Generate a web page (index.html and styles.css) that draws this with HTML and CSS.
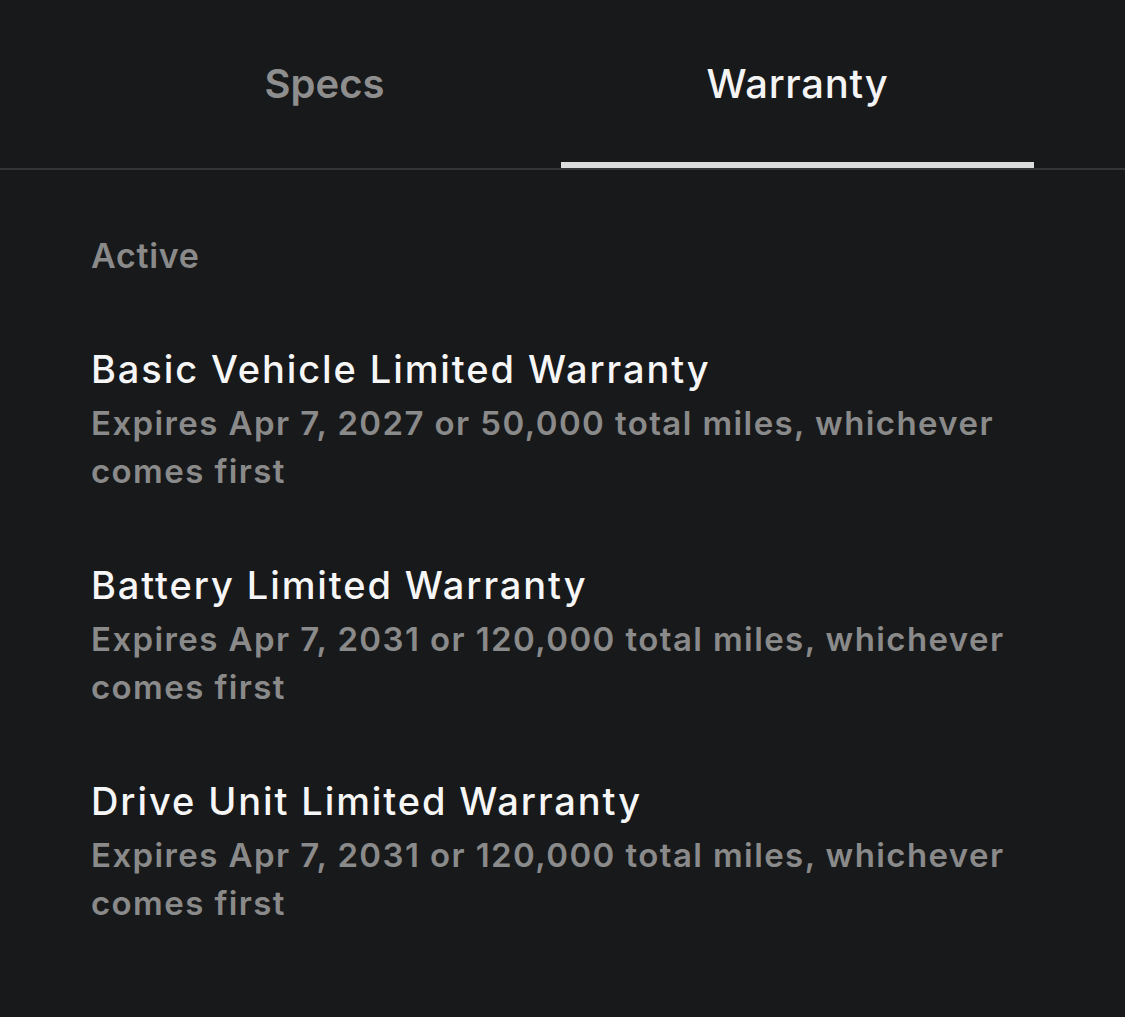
FILE: index.html
```html
<!DOCTYPE html>
<html lang="en">
<head>
    <meta charset="UTF-8">
    <meta name="viewport" content="width=device-width, initial-scale=1.0">
    <title>Warranty</title>
    <link rel="stylesheet" href="styles.css">
</head>
<body>
    <div class="tabs">
        <div class="tab">Specs</div>
        <div class="tab active">Warranty</div>
    </div>

    <div class="warranty">
        <div class="section-label">Active</div>

        <div class="item">
            <div class="item-title">Basic Vehicle Limited Warranty</div>
            <div class="item-desc">Expires Apr 7, 2027 or 50,000 total miles, whichever comes first</div>
        </div>

        <div class="item">
            <div class="item-title">Battery Limited Warranty</div>
            <div class="item-desc">Expires Apr 7, 2031 or 120,000 total miles, whichever comes first</div>
        </div>

        <div class="item">
            <div class="item-title">Drive Unit Limited Warranty</div>
            <div class="item-desc">Expires Apr 7, 2031 or 120,000 total miles, whichever comes first</div>
        </div>
    </div>
</body>
</html>
```

FILE: styles.css
```css
body {
    margin: 0;
    background-color: #18191b;
    font-family: Inter, "Noto Sans", sans-serif;
    color: #f4f4f4;
}
.tabs {
    display: flex;
    padding: 0 91px 0 88px;
    border-bottom: 2px solid #343537;
}
.tab {
    flex: 1;
    text-align: center;
    font-size: 40px;
    font-weight: 600;
    color: #8e8e8e;
    padding-top: 59px;
    height: 103px;
    border-bottom: 6px solid transparent;
}
.tab.active {
    color: #f4f4f4;
    font-weight: 500;
    letter-spacing: 0.7px;
    border-bottom-color: #dddddd;
}
.warranty {
    padding: 66px 80px 0 91px;
}
.section-label {
    font-size: 34px;
    line-height: 40px;
    font-weight: 600;
    letter-spacing: 0.7px;
    color: #8a8a8a;
    margin-bottom: 67px;
}
.item {
    margin-bottom: 64px;
}
.item-title {
    font-size: 38px;
    line-height: 52px;
    font-weight: 500;
    letter-spacing: 1.9px;
    color: #f6f6f6;
    margin-bottom: 4px;
}
.item-desc {
    font-size: 33px;
    line-height: 48px;
    font-weight: 600;
    letter-spacing: 1.4px;
    color: #8a8a8a;
}
```
